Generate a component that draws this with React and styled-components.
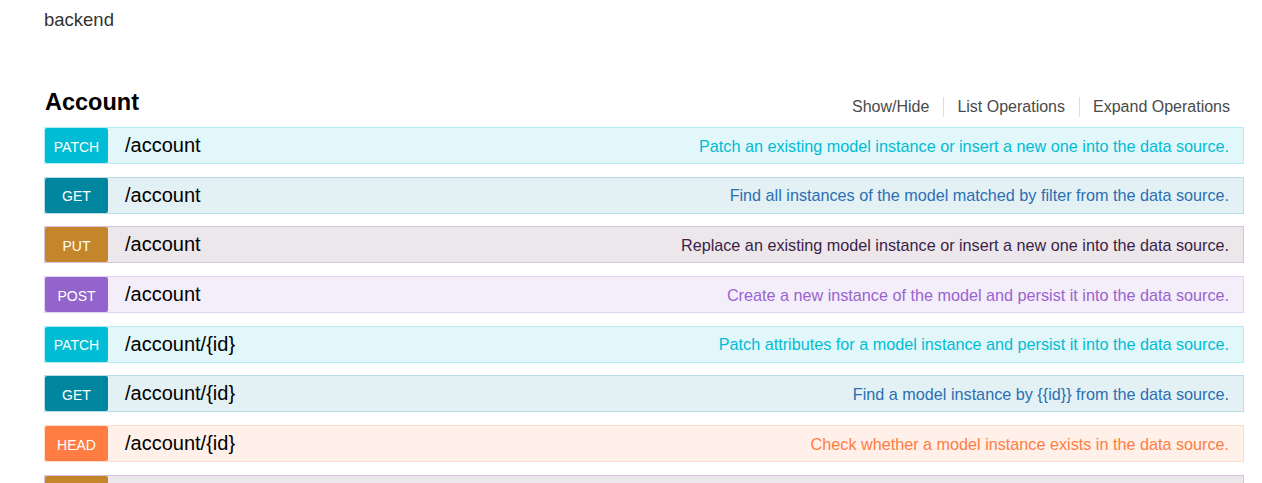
import React from 'react';
import styled, { createGlobalStyle } from 'styled-components';

const methods = {
  patch: { badge: '#00bcd4', bg: '#e2f7fa', border: '#b5ecf3', text: '#00bcd4' },
  get: { badge: '#00869e', bg: '#e3f1f5', border: '#b8dbe5', text: '#2b6fb3' },
  put: { badge: '#c5862b', bg: '#ece7eb', border: '#d6c3da', text: '#3b1f4a' },
  post: { badge: '#9264cc', bg: '#f3eefa', border: '#e2d3f5', text: '#9a63d0' },
  head: { badge: '#ff7d42', bg: '#fff0ea', border: '#fcdccb', text: '#ff7d42' },
  delete: { badge: '#e53935', bg: '#fdecec', border: '#f6c6c5', text: '#e53935' }
};

const operations = [
  { method: 'patch', path: '/account', summary: 'Patch an existing model instance or insert a new one into the data source.' },
  { method: 'get', path: '/account', summary: 'Find all instances of the model matched by filter from the data source.' },
  { method: 'put', path: '/account', summary: 'Replace an existing model instance or insert a new one into the data source.' },
  { method: 'post', path: '/account', summary: 'Create a new instance of the model and persist it into the data source.' },
  { method: 'patch', path: '/account/{id}', summary: 'Patch attributes for a model instance and persist it into the data source.' },
  { method: 'get', path: '/account/{id}', summary: 'Find a model instance by {{id}} from the data source.' },
  { method: 'head', path: '/account/{id}', summary: 'Check whether a model instance exists in the data source.' },
  { method: 'put', path: '/account/{id}', summary: 'Replace attributes for a model instance and persist it into the data source.' },
  { method: 'delete', path: '/account/{id}', summary: 'Delete a model instance by {{id}} from the data source.' }
];

const GlobalStyle = createGlobalStyle`
  body {
    margin: 0;
    background: #fff;
    font-family: "Liberation Sans", Arial, sans-serif;
  }
`;

const Page = styled.div`
  padding: 7px 18px 0 44px;
  width: 1200px;
`;

const Title = styled.div`
  font-size: 18.5px;
  color: #333;
  line-height: 26px;
`;

const ResourceHeader = styled.div`
  display: flex;
  align-items: center;
  justify-content: space-between;
  margin-top: 52px;
  height: 34px;
`;

const Heading = styled.h2`
  margin: 0 0 0 1px;
  font-size: 23.5px;
  font-weight: bold;
  color: #000;
`;

const Links = styled.ul`
  display: flex;
  list-style: none;
  margin: 10px 0 0;
  padding: 0;
`;

const LinkItem = styled.li`
  font-size: 16px;
  color: #4a4a4a;
  padding: 0 14px 0 13px;
  line-height: 20px;
  border-left: ${(p) => (p.$first ? 'none' : '1px solid #ddd')};
`;

const OperationList = styled.div`
  display: flex;
  flex-direction: column;
  gap: 12.7px;
  margin-top: 8px;
`;

const Row = styled.div`
  display: flex;
  align-items: center;
  height: 35px;
  background: ${(p) => methods[p.$method].bg};
  border: 1px solid ${(p) => methods[p.$method].border};
`;

const Badge = styled.span`
  display: flex;
  align-items: center;
  justify-content: center;
  box-sizing: border-box;
  width: 63px;
  height: 35px;
  padding-top: 2px;
  border-radius: 2px;
  background: ${(p) => methods[p.$method].badge};
  color: #fff;
  font-size: 14px;
  text-transform: uppercase;
`;

const Path = styled.span`
  margin-left: 17px;
  font-size: 20px;
  color: #000;
  flex: 1;
`;

const Summary = styled.span`
  margin-right: 14px;
  padding-top: 1px;
  font-size: 16.2px;
  color: ${(p) => methods[p.$method].text};
`;

const App = () => (
  <Page>
    <GlobalStyle />
    <Title>backend</Title>
    <ResourceHeader>
      <Heading>Account</Heading>
      <Links>
        <LinkItem $first>Show/Hide</LinkItem>
        <LinkItem>List Operations</LinkItem>
        <LinkItem>Expand Operations</LinkItem>
      </Links>
    </ResourceHeader>
    <OperationList>
      {operations.map((op, i) => (
        <Row key={i} $method={op.method}>
          <Badge $method={op.method}>{op.method}</Badge>
          <Path>{op.path}</Path>
          <Summary $method={op.method}>{op.summary}</Summary>
        </Row>
      ))}
    </OperationList>
  </Page>
);

export default App;
